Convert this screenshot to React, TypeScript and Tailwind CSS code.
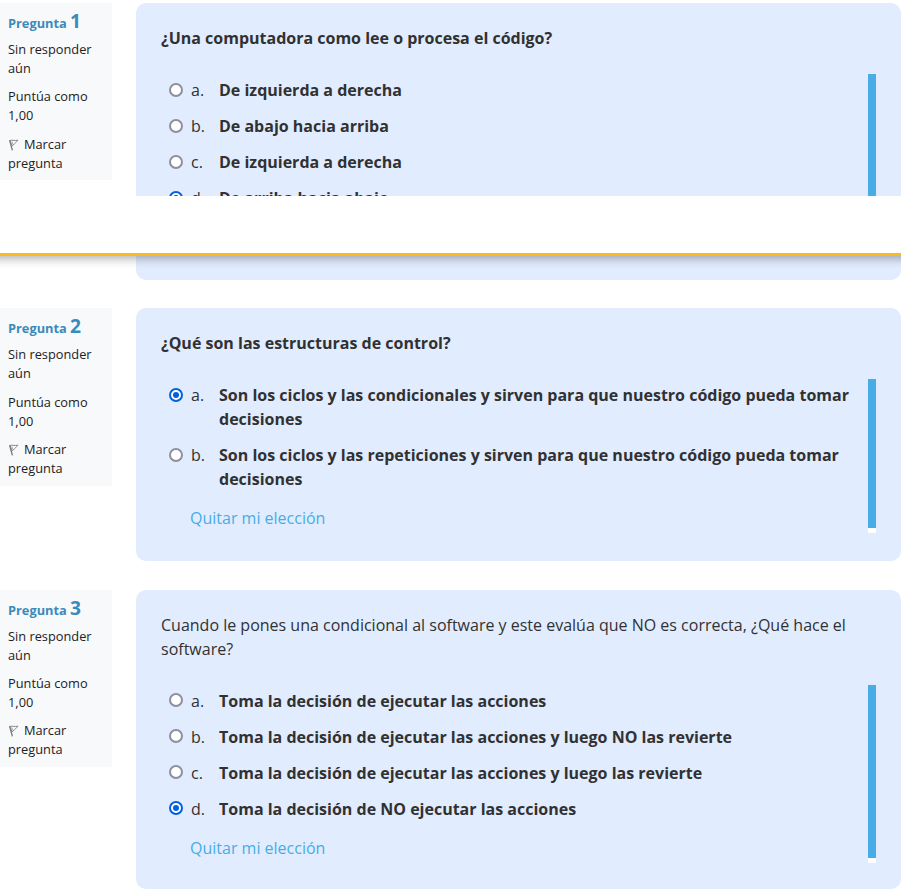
type Question = {
  number: number;
  prompt: string;
  boldPrompt: boolean;
  options: string[];
  selected: number;
  markGap: string;
  flagGap: string;
  infoHeight: string;
  cardHeight: string;
  radioShift: string;
};

const questions: Question[] = [
  {
    number: 1,
    prompt: '¿Una computadora como lee o procesa el código?',
    boldPrompt: true,
    options: [
      'De izquierda a derecha',
      'De abajo hacia arriba',
      'De izquierda a derecha',
      'De arriba hacia abajo',
    ],
    selected: 3,
    markGap: 'mt-[9px]',
    flagGap: 'mt-[10px]',
    infoHeight: 'h-[177px]',
    cardHeight: 'h-[277px]',
    radioShift: 'mt-[5px]',
  },
  {
    number: 2,
    prompt: '¿Qué son las estructuras de control?',
    boldPrompt: true,
    options: [
      'Son los ciclos y las condicionales y sirven para que nuestro código pueda tomar decisiones',
      'Son los ciclos y las repeticiones y sirven para que nuestro código pueda tomar decisiones',
    ],
    selected: 0,
    markGap: 'mt-[10px]',
    flagGap: 'mt-[9px]',
    infoHeight: 'h-[178px]',
    cardHeight: 'h-[253px]',
    radioShift: 'mt-[5px]',
  },
  {
    number: 3,
    prompt:
      'Cuando le pones una condicional al software y este evalúa que NO es correcta, ¿Qué hace el software?',
    boldPrompt: false,
    options: [
      'Toma la decisión de ejecutar las acciones',
      'Toma la decisión de ejecutar las acciones y luego NO las revierte',
      'Toma la decisión de ejecutar las acciones y luego las revierte',
      'Toma la decisión de NO ejecutar las acciones',
    ],
    selected: 3,
    markGap: 'mt-[9px]',
    flagGap: 'mt-[9px]',
    infoHeight: 'h-[177px]',
    cardHeight: 'h-[299px]',
    radioShift: 'mt-[4px]',
  },
];

function Radio({ checked, shift }: { checked: boolean; shift: string }) {
  return (
    <span
      role="radio"
      aria-checked={checked}
      className={`${shift} flex size-[14px] shrink-0 items-center justify-center rounded-full border-2 bg-white ${
        checked ? 'border-[#0060df]' : 'border-[#8f8f9d]'
      }`}
    >
      {checked && <span className="size-1.5 rounded-full bg-[#0060df]" />}
    </span>
  );
}

function FlagIcon() {
  return (
    <svg width="10" height="12" viewBox="0 0 10 12" fill="none" className="mr-[5px] ml-px inline-block align-[-2px]">
      <path d="M0.6 1.2 3.4 11.4" stroke="#777" strokeWidth="1.3" />
      <path d="M1 1.5C3 .5 5 2.2 9 1.2C7.2 2.8 6.5 4.5 3 6.8Z" stroke="#888" strokeWidth="1" />
      <path d="M2.8 2.3 4 5.6" stroke="#999" strokeWidth="0.8" />
    </svg>
  );
}

function QuestionInfo({ q }: { q: Question }) {
  return (
    <aside
      className={`${q.infoHeight} w-28 shrink-0 bg-[#f8f9fa] px-2 pt-[6px] text-[12.8px] leading-[19px] text-[#1d2125]`}
    >
      <h3 className="h-[31px] font-bold leading-6 text-[#3a8bbb]">
        Pregunta <span className="text-[19.2px]">{q.number}</span>
      </h3>
      <div>Sin responder aún</div>
      <div className={q.markGap}>Puntúa como 1,00</div>
      <div className={q.flagGap}>
        <FlagIcon />
        Marcar pregunta
      </div>
    </aside>
  );
}

function QuestionBody({ q }: { q: Question }) {
  return (
    <section
      className={`${q.cardHeight} flex-1 rounded-[10px] bg-[#e1ecff] px-[25px] pt-[23px] text-base leading-6 text-[#313131]`}
    >
      <p className={q.boldPrompt ? 'font-bold' : ''}>{q.prompt}</p>
      <div className="mt-6 flex">
        <div className="flex-1 pt-1 pb-[3px]">
          <div className="flex flex-col gap-3 pl-2">
            {q.options.map((text, i) => (
              <div key={i} className="flex">
                <Radio checked={i === q.selected} shift={q.radioShift} />
                <span className="ml-2 w-7 shrink-0">{'abcd'[i]}.</span>
                <span className="w-[645px] font-bold">{text}</span>
              </div>
            ))}
          </div>
          <a className="mt-[15px] ml-[29px] inline-block text-[#48ace6]">Quitar mi elección</a>
        </div>
        <div className="w-2 shrink-0 border-b-[5px] border-white bg-[#48ace6]" />
      </div>
    </section>
  );
}

function QuestionRow({ q }: { q: Question }) {
  return (
    <div className="flex items-start gap-6">
      <QuestionInfo q={q} />
      <QuestionBody q={q} />
    </div>
  );
}

export default function App() {
  return (
    <main className="h-[889px] w-[901px] overflow-hidden bg-white font-['Open_Sans','Noto_Sans',sans-serif]">
      <div className="h-[196px] overflow-hidden pt-[3px]">
        <QuestionRow q={questions[0]} />
      </div>
      <div className="relative -mx-3 h-[60px] border-b-[3px] border-[#fbba20] bg-white shadow-[0_3px_9px_rgba(0,0,0,0.3)] [clip-path:inset(0_0_-20px_0)]" />
      <div className="ml-[136px] h-6 rounded-b-[10px] bg-[#e1ecff]" />
      <div className="mt-7 flex flex-col gap-[29px]">
        <QuestionRow q={questions[1]} />
        <QuestionRow q={questions[2]} />
      </div>
    </main>
  );
}
